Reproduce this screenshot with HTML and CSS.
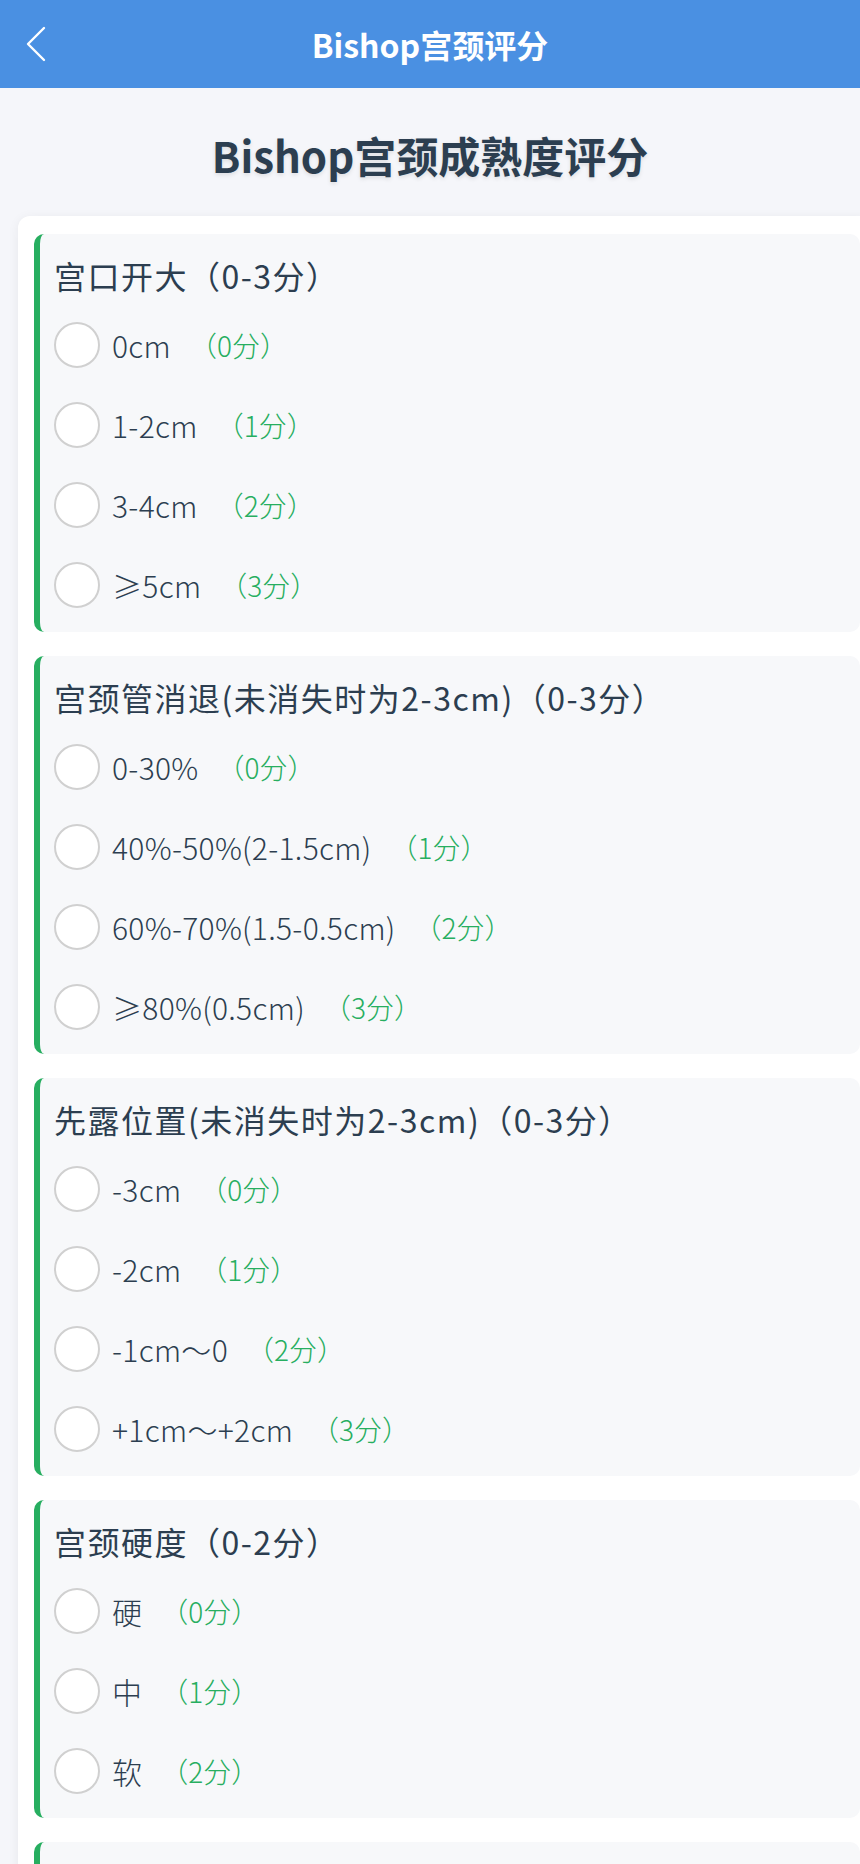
FILE: index.html
```html
<!DOCTYPE html>
<html lang="zh-CN">
<head>
    <meta charset="UTF-8">
    <meta name="viewport" content="width=device-width, initial-scale=1.0">
    <title>Bishop宫颈评分</title>
    <link rel="stylesheet" href="styles.css">
</head>
<body>

    <div class="nav-bar">
        <a href="#" class="back-button">
            <svg width="22" height="36" viewBox="0 0 22 36">
                <path d="M19 2 L3 18 L19 34" fill="none" stroke="#fff" stroke-width="2.4" stroke-linecap="round" stroke-linejoin="round"/>
            </svg>
        </a>
        <div class="nav-title">Bishop宫颈评分</div>
        <div></div>
    </div>

    <h1 class="page-title">Bishop宫颈成熟度评分</h1>

    <div class="score-card">

        <!-- 宫口开大 -->
        <div class="score-item">
            <div class="item-title">宫口开大（0-3分）</div>
            <ul class="options">
                <li><span class="radio"></span><span class="option-label">0cm</span><span class="option-score">（0分）</span></li>
                <li><span class="radio"></span><span class="option-label">1-2cm</span><span class="option-score">（1分）</span></li>
                <li><span class="radio"></span><span class="option-label">3-4cm</span><span class="option-score">（2分）</span></li>
                <li><span class="radio"></span><span class="option-label">≥5cm</span><span class="option-score">（3分）</span></li>
            </ul>
        </div>

        <!-- 宫颈管消退 -->
        <div class="score-item">
            <div class="item-title">宫颈管消退(未消失时为2-3cm)（0-3分）</div>
            <ul class="options">
                <li><span class="radio"></span><span class="option-label">0-30%</span><span class="option-score">（0分）</span></li>
                <li><span class="radio"></span><span class="option-label">40%-50%(2-1.5cm)</span><span class="option-score">（1分）</span></li>
                <li><span class="radio"></span><span class="option-label">60%-70%(1.5-0.5cm)</span><span class="option-score">（2分）</span></li>
                <li><span class="radio"></span><span class="option-label">≥80%(0.5cm)</span><span class="option-score">（3分）</span></li>
            </ul>
        </div>

        <!-- 先露位置 -->
        <div class="score-item">
            <div class="item-title">先露位置(未消失时为2-3cm)（0-3分）</div>
            <ul class="options">
                <li><span class="radio"></span><span class="option-label">-3cm</span><span class="option-score">（0分）</span></li>
                <li><span class="radio"></span><span class="option-label">-2cm</span><span class="option-score">（1分）</span></li>
                <li><span class="radio"></span><span class="option-label">-1cm～0</span><span class="option-score">（2分）</span></li>
                <li><span class="radio"></span><span class="option-label">+1cm～+2cm</span><span class="option-score">（3分）</span></li>
            </ul>
        </div>

        <!-- 宫颈硬度 -->
        <div class="score-item">
            <div class="item-title">宫颈硬度（0-2分）</div>
            <ul class="options">
                <li><span class="radio"></span><span class="option-label">硬</span><span class="option-score">（0分）</span></li>
                <li><span class="radio"></span><span class="option-label">中</span><span class="option-score">（1分）</span></li>
                <li><span class="radio"></span><span class="option-label">软</span><span class="option-score">（2分）</span></li>
            </ul>
        </div>

        <!-- 宫口位置 -->
        <div class="score-item">
            <div class="item-title">宫口位置（0-2分）</div>
            <ul class="options">
                <li><span class="radio"></span><span class="option-label">朝后</span><span class="option-score">（0分）</span></li>
                <li><span class="radio"></span><span class="option-label">居中</span><span class="option-score">（1分）</span></li>
                <li><span class="radio"></span><span class="option-label">朝前</span><span class="option-score">（2分）</span></li>
            </ul>
        </div>

    </div>

</body>
</html>
```

FILE: styles.css
```css
body {
    margin: 0;
    font-family: "Noto Sans CJK SC", "Noto Sans", sans-serif;
    background-color: #f5f6fa;
    color: #2c3e50;
    overflow-x: hidden;
}

.nav-bar {
    display: grid;
    grid-template-columns: 88px 1fr 88px;
    align-items: center;
    height: 88px;
    background-color: #4a90e2;
}

.back-button {
    display: flex;
    margin-left: 25px;
}

.nav-title {
    text-align: center;
    color: #fff;
    font-size: 32px;
    font-weight: 700;
}

.page-title {
    margin: 38px 0 32px;
    font-size: 42px;
    line-height: 58px;
    font-weight: 700;
    text-align: center;
    color: #2c3e50;
    text-shadow: 0 2px 4px rgba(0, 0, 0, 0.1);
}

.score-card {
    display: flex;
    flex-direction: column;
    gap: 24px;
    width: 858px;
    margin-left: 18px;
    padding: 18px 16px;
    box-sizing: border-box;
    background-color: #fff;
    border-radius: 12px;
    box-shadow: 0 2px 12px rgba(0, 0, 0, 0.06);
}

.score-item {
    background-color: #f7f8fa;
    border-left: 6px solid #27ae60;
    border-radius: 10px;
    padding: 20px 16px 24px 14px;
}

.item-title {
    font-size: 32px;
    line-height: 42px;
    font-weight: 400;
    letter-spacing: 1.5px;
    margin-bottom: 26px;
}

.options {
    list-style-type: none;
    margin: 0;
    padding: 0;
    display: flex;
    flex-direction: column;
    gap: 34px;
}

.options li {
    display: flex;
    align-items: center;
    height: 46px;
}

.radio {
    width: 46px;
    height: 46px;
    box-sizing: border-box;
    border: 2px solid #d0d0d0;
    border-radius: 50%;
    background-color: #fff;
    flex-shrink: 0;
}

.option-label {
    margin-left: 12px;
    font-size: 30px;
    font-weight: 300;
    letter-spacing: 0.3px;
}

.option-score {
    margin-left: 18px;
    font-size: 28px;
    font-weight: 300;
    color: #27ae60;
}
```
